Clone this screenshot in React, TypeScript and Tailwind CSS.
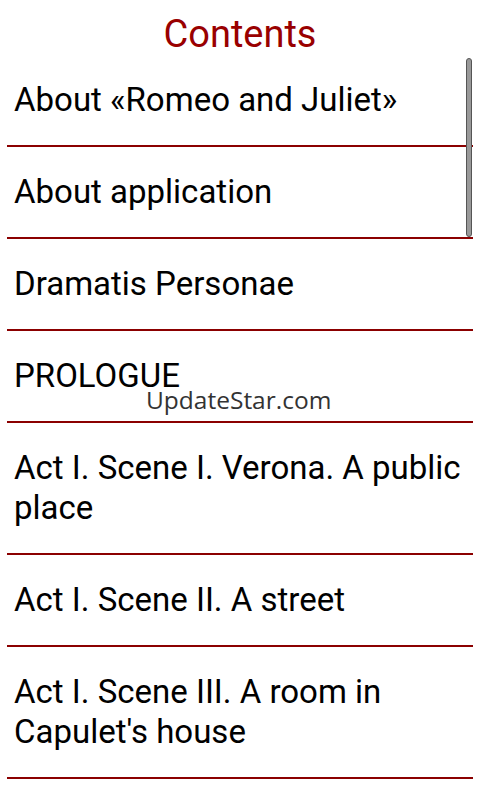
const items = [
  "About «Romeo and Juliet»",
  "About application",
  "Dramatis Personae",
  "PROLOGUE",
  "Act I. Scene I. Verona. A public place",
  "Act I. Scene II. A street",
  "Act I. Scene III. A room in Capulet's house",
];

export default function App() {
  return (
    <div className="relative h-[800px] w-[480px] overflow-hidden bg-white font-['Roboto',sans-serif]">
      <h1 className="h-[55px] pt-[14px] text-center text-[38px] leading-[40px] text-[#990000]">Contents</h1>

      <ul className="mx-[7px]">
        {items.map((item) => (
          <li key={item} className="border-b-2 border-[#8b0000] py-[25px] pl-[7px] pr-[2px] text-[33px] leading-[40px] text-black">
            {item}
          </li>
        ))}
      </ul>

      {/* scroll indicator */}
      <div className="absolute left-[466px] top-[58px] h-[179px] w-[6px] rounded-full border border-[#555] bg-[#999]" />

      {/* watermark */}
      <div className="absolute left-[146px] top-[384px] font-['Open_Sans',sans-serif] text-[24.5px] leading-[32px] text-[#333]">
        UpdateStar.com
      </div>
    </div>
  );
}
